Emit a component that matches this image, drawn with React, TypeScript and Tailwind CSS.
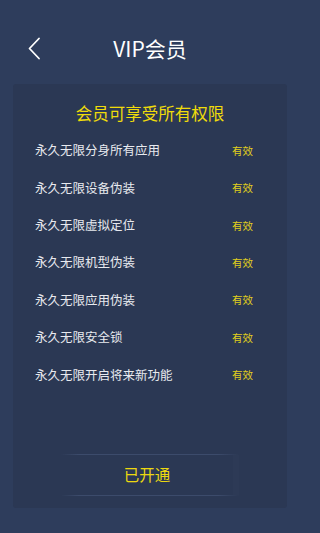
import React from "react";

const perks = [
  "永久无限分身所有应用",
  "永久无限设备伪装",
  "永久无限虚拟定位",
  "永久无限机型伪装",
  "永久无限应用伪装",
  "永久无限安全锁",
  "永久无限开启将来新功能",
];

const App: React.FC = () => {
  return (
    <div className="w-full min-h-[533px] bg-[#2e3d5c] font-['Noto_Sans_CJK_SC','Noto_Sans',sans-serif]">
      <div className="w-[300px] h-[533px] flex flex-col">
        {/* 顶部栏 */}
        <header className="relative h-[84px] flex justify-center pt-[34px]">
          <button className="absolute left-[26px] top-[36px] w-[16px] h-[24px] flex items-center justify-center">
            <svg width="14" height="23" viewBox="0 0 14 23" fill="none">
              <polyline
                points="12,1.5 2.5,11.5 12,21.5"
                stroke="#ffffff"
                strokeWidth="1.8"
                strokeLinecap="round"
                strokeLinejoin="round"
              />
            </svg>
          </button>
          <h1 className="text-[21px] leading-[28px] text-white">VIP会员</h1>
        </header>

        {/* 权益卡片 */}
        <section className="mx-[13px] h-[424px] rounded-[3px] bg-[#2b3854] flex flex-col">
          <h2 className="pt-[17px] text-center text-[16.5px] leading-[24px] text-[#f0dc0a]">
            会员可享受所有权限
          </h2>
          <ul className="mt-[7px] flex flex-col">
            {perks.map((p) => (
              <li
                key={p}
                className="h-[37.4px] flex items-center justify-between pl-[22px] pr-[34px]"
              >
                <span className="text-[12.5px] text-[#e8eaef]">{p}</span>
                <span className="text-[10.5px] text-[#e0cf1c]">有效</span>
              </li>
            ))}
          </ul>

          <div className="mt-auto mb-[12px] mx-auto w-[178px] h-[42px] flex flex-col">
            <div className="h-px bg-[linear-gradient(90deg,transparent,#3c4b6b_10%,#3c4b6b_88%,transparent)]" />
            <div className="flex-1 flex items-center justify-center border-r-[6px] border-[#2d3a56]">
              <span className="text-[15.5px] text-[#ecd810]">已开通</span>
            </div>
            <div className="h-px bg-[linear-gradient(90deg,transparent,#3c4b6b_10%,#3c4b6b_88%,transparent)]" />
          </div>
        </section>
      </div>
    </div>
  );
};

export default App;
